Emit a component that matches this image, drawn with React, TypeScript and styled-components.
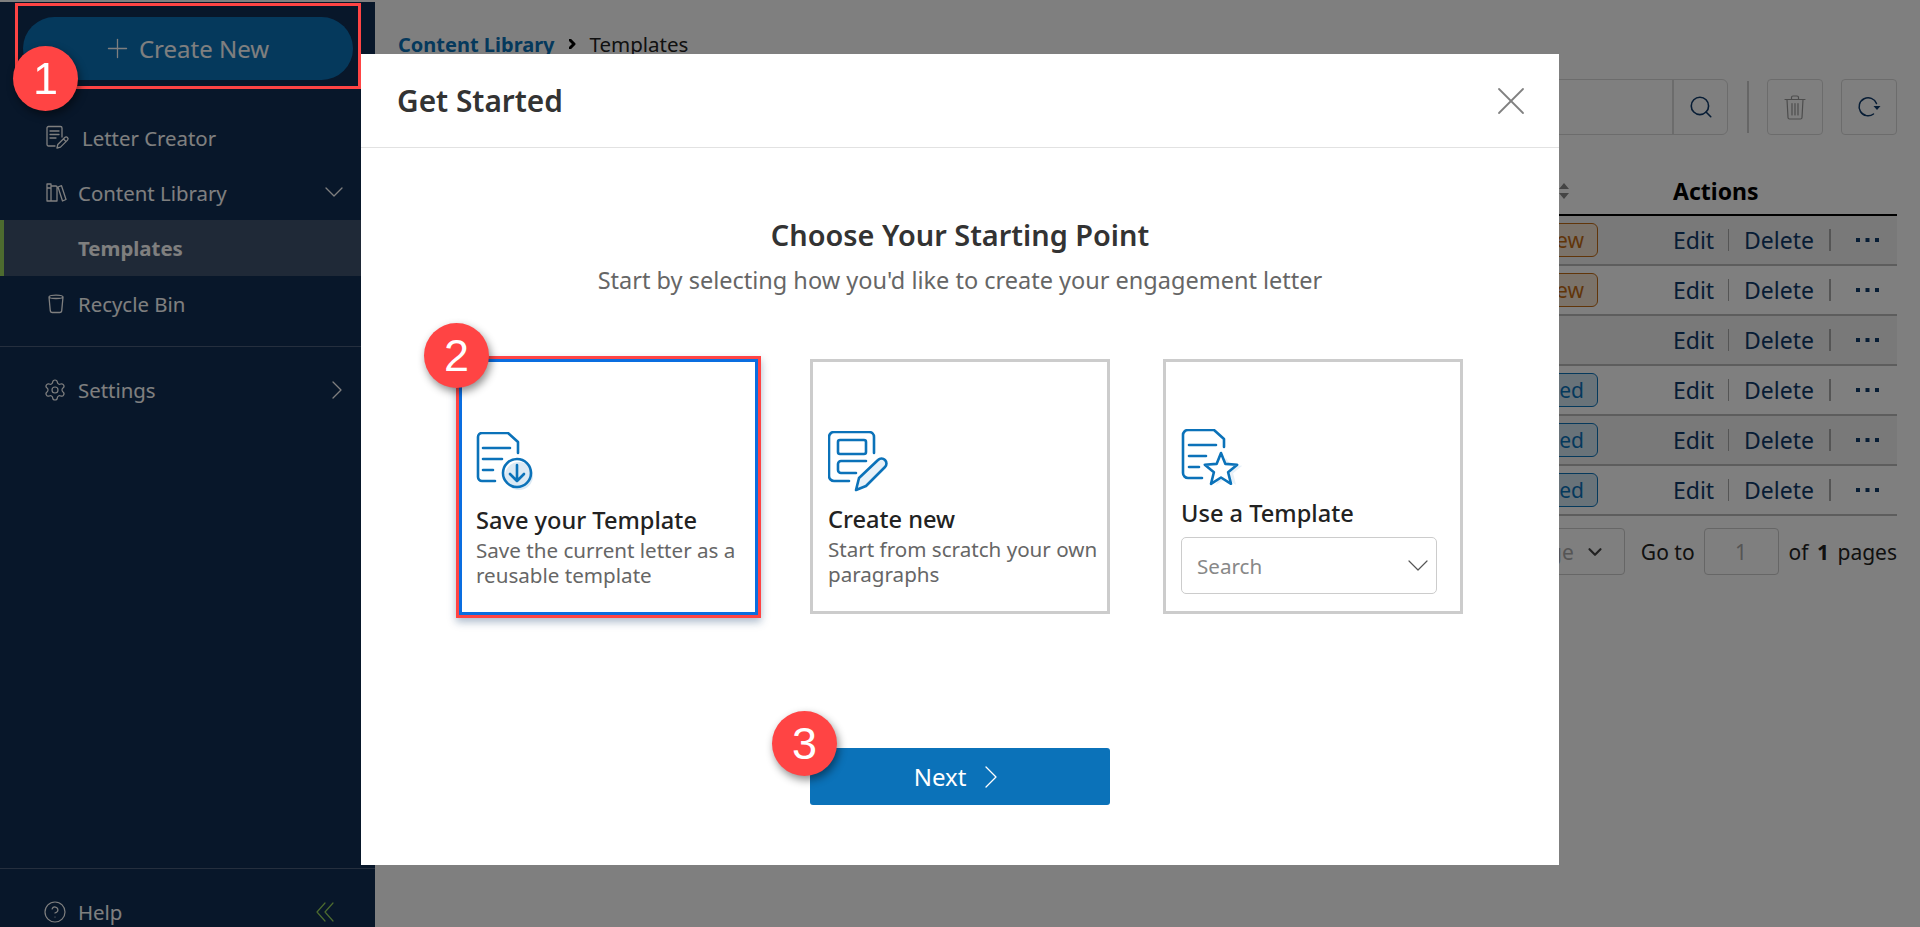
import styled, { createGlobalStyle } from "styled-components";
import { ChevronDown, CircleHelp, Plus, Search, Settings, X } from "lucide-react";

const FONT = `"Noto Sans", "Open Sans", sans-serif`;
const RED = "#ff4444";
const BLUE = "#0b72b9";

const GlobalStyle = createGlobalStyle`
  html, body {
    margin: 0;
    height: 100%;
    overflow: hidden;
    background: #fff;
  }
  * { box-sizing: border-box; }
  body { font-family: ${FONT}; }
`;

const Page = styled.div`
  display: flex;
  height: 927px;
  padding-top: 2px;
`;

const Sidebar = styled.aside`
  width: 375px;
  flex-shrink: 0;
  display: flex;
  flex-direction: column;
  background: #102e54;
  color: #fff;
  font-size: 20.4px;
`;

const CreateButton = styled.button`
  width: 330px;
  height: 63px;
  margin: 15px 0 30px 23px;
  padding: 0 5px 0 0;
  display: flex;
  align-items: center;
  justify-content: center;
  gap: 6px;
  border: 0;
  border-radius: 32px;
  background: ${BLUE};
  color: #fff;
  font: 400 24px ${FONT};
`;

const NavRow = styled.div<{ $active?: boolean; $height?: number; $indent?: number; $gap?: number }>`
  height: ${(p) => p.$height ?? 56}px;
  display: flex;
  align-items: center;
  padding-left: ${(p) => p.$indent ?? 46}px;
  width: 361px;
  gap: ${(p) => p.$gap ?? 6}px;
  font-weight: ${(p) => (p.$active ? 700 : 400)};
  background: ${(p) => (p.$active ? "#3e526e" : "transparent")};
  border-left: ${(p) => (p.$active ? "4px solid #9ad65e" : "0")};
`;

const NavEnd = styled.span`
  margin-left: auto;
  margin-right: 18px;
  display: flex;
`;

const SideDivider = styled.div`
  height: 1px;
  width: 361px;
  margin: 14px 0 15px;
  background: #4a5f7c;
`;

const SideFooter = styled.div`
  margin-top: auto;
  height: 59px;
  width: 375px;
  padding: 27px 0 0 43px;
  display: flex;
  align-items: center;
  gap: 11px;
  border-top: 1px solid #4a5f7c;
`;

const CollapseButton = styled.span`
  margin-left: auto;
  margin-right: 41px;
  display: flex;
`;

const Main = styled.main`
  flex: 1;
  min-width: 0;
  padding: 27px 23px 0;
  font-size: 23px;
  color: #222;
`;

const Crumbs = styled.div`
  height: 30px;
  display: flex;
  align-items: center;
  gap: 14px;
  font-size: 20.5px;
`;

const CrumbLink = styled.span`
  color: ${BLUE};
  font-weight: 700;
  font-size: 20px;
`;

const Toolbar = styled.div`
  margin-top: 20px;
  display: flex;
  justify-content: flex-end;
  align-items: center;
  gap: 18px;
`;

const SearchBox = styled.div`
  width: 420px;
  height: 56px;
  margin-right: 1px;
  display: flex;
  justify-content: flex-end;
  border: 1px solid #d9d9d9;
  border-radius: 6px;
`;

const SearchAddon = styled.div`
  width: 55px;
  display: flex;
  align-items: center;
  justify-content: center;
  border-left: 2px solid #d9d9d9;
  color: #0f3a6b;
`;

const ToolDivider = styled.div`
  width: 2px;
  height: 52px;
  background: #ccc;
`;

const ToolButton = styled.div<{ $color: string }>`
  width: 56px;
  height: 56px;
  display: flex;
  align-items: center;
  justify-content: center;
  border: 1px solid #d9d9d9;
  border-radius: 4px;
  color: ${(p) => p.$color};
`;

const TableRow = styled.div<{ $alt?: boolean }>`
  height: 50px;
  display: grid;
  grid-template-columns: 1fr 224px;
  column-gap: 75px;
  align-items: center;
  border-bottom: 2px solid #bbb;
  background: ${(p) => (p.$alt ? "#f3f3f3" : "transparent")};
`;

const TableHead = styled(TableRow)`
  height: 66px;
  margin-top: 15px;
  padding-top: 17px;
  border-bottom-color: #000;
  font-weight: 700;
  color: #000;
`;

const StatusCell = styled.div`
  display: flex;
  justify-content: flex-end;
`;

const SortCell = styled(StatusCell)`
  padding-right: 28px;
`;

const Status = styled.span<{ $tone: "review" | "published" }>`
  height: 34px;
  padding: 0 13px;
  display: flex;
  align-items: center;
  border-radius: 6px;
  font-size: 21px;
  color: ${(p) => (p.$tone === "review" ? "#c26a12" : BLUE)};
  border: 1px solid ${(p) => (p.$tone === "review" ? "#c26a12" : BLUE)};
  background: ${(p) => (p.$tone === "review" ? "#f7e6d5" : "#d3e6f3")};
`;

const Actions = styled.div`
  display: flex;
  align-items: center;
  color: #0f3a6b;
`;

const ActionLink = styled.span`
  width: 55px;
`;

const DeleteLink = styled.span`
  width: 85px;
`;

const ActionSep = styled.span`
  width: 1px;
  height: 22px;
  margin-right: 15px;
  background: #aaa;
`;

const DeleteSep = styled(ActionSep)`
  width: 2px;
  margin-right: 25px;
`;

const Pagination = styled.div`
  margin-top: 12px;
  display: flex;
  justify-content: flex-end;
  align-items: center;
  font-size: 21px;
`;

const PageSelect = styled.div`
  width: 170px;
  height: 47px;
  padding-right: 18px;
  display: flex;
  align-items: center;
  justify-content: flex-end;
  gap: 10px;
  border: 1px solid #ccc;
  border-radius: 4px;
  color: #aaa;
  white-space: nowrap;
`;

const GoTo = styled.span`
  margin: 0 9px 0 16px;
`;

const PageInput = styled.div`
  width: 75px;
  height: 47px;
  display: flex;
  align-items: center;
  justify-content: center;
  border: 1px solid #ccc;
  border-radius: 4px;
  color: #aaa;
`;

const PageCount = styled.span`
  margin-left: 10px;
  white-space: pre;
`;

const PageTotal = styled.b`
  margin: 0 3px;
`;

const Backdrop = styled.div`
  position: fixed;
  inset: 0;
  display: flex;
  justify-content: center;
  padding-top: 54px;
  background: rgba(0, 0, 0, 0.5);
`;

const Modal = styled.section`
  width: 1198px;
  height: 811px;
  display: flex;
  flex-direction: column;
  background: #fff;
`;

const ModalHeader = styled.header`
  height: 94px;
  flex-shrink: 0;
  padding: 0 24px 0 36px;
  display: flex;
  align-items: center;
  justify-content: space-between;
  border-bottom: 1px solid #e2e2e2;
  color: #333;
  font-size: 29.8px;
  font-weight: 600;
`;

const CloseIcon = styled.span`
  display: flex;
  color: #808080;
`;

const ModalBody = styled.div`
  display: flex;
  flex-direction: column;
  align-items: center;
  padding-top: 70px;
`;

const Heading = styled.h2`
  margin: 0;
  font-size: 28.9px;
  line-height: 34px;
  font-weight: 600;
  color: #333;
`;

const Subheading = styled.p`
  margin: 13px 0 0;
  font-size: 23.5px;
  line-height: 30px;
  color: #666;
`;

const Cards = styled.div`
  margin-top: 64px;
  display: flex;
  align-items: flex-start;
  gap: 53px;
`;

const Card = styled.div<{ $selected?: boolean; $bottom?: number }>`
  position: relative;
  width: ${(p) => (p.$selected ? 299 : 300)}px;
  height: ${(p) => (p.$selected ? 256 : 255)}px;
  margin: ${(p) => (p.$selected ? "0 -1px 0 2px" : "0")};
  padding: 0 8px ${(p) => p.$bottom ?? 24}px ${(p) => (p.$selected ? 14 : 15)}px;
  display: flex;
  flex-direction: column;
  justify-content: flex-end;
  border: 3px solid ${(p) => (p.$selected ? "#0a6ee0" : "#ccc")};
  outline: ${(p) => (p.$selected ? `3px solid ${RED}` : "none")};
  box-shadow: ${(p) => (p.$selected ? "0 4px 8px 3px rgba(20, 60, 110, 0.35)" : "none")};
`;

const CardIcon = styled.svg`
  display: block;
`;

const CardTitle = styled.div`
  margin-top: 8px;
  font-size: 23.6px;
  line-height: 36px;
  font-weight: 500;
  color: #222;
`;

const CardText = styled.div`
  font-size: 20.6px;
  line-height: 25px;
  color: #666;
`;

const SearchSelect = styled.div`
  height: 57px;
  margin: 6px 15px 0 0;
  padding: 0 8px 0 15px;
  display: flex;
  align-items: center;
  justify-content: space-between;
  border: 1px solid #ccc;
  border-radius: 5px;
  font-size: 20.6px;
  color: #888;
`;

const NextWrap = styled.div`
  position: relative;
  margin-top: 133px;
`;

const NextButton = styled.button`
  width: 300px;
  height: 57px;
  padding: 0 8px 0 0;
  display: flex;
  align-items: center;
  justify-content: center;
  gap: 19px;
  border: 0;
  border-radius: 3px;
  background: ${BLUE};
  color: #fff;
  font: 400 24px ${FONT};
`;

const Frame = styled.div`
  position: absolute;
  left: 15px;
  top: 3px;
  width: 346px;
  height: 86px;
  border: 3px solid ${RED};
`;

const Badge = styled.div<{ $x: number; $y: number }>`
  position: absolute;
  left: ${(p) => p.$x}px;
  top: ${(p) => p.$y}px;
  width: 65px;
  height: 65px;
  display: flex;
  align-items: center;
  justify-content: center;
  border-radius: 50%;
  background: ${RED};
  color: #fff;
  font: 400 45px "Liberation Sans", Arial, sans-serif;
  box-shadow: 2px 4px 8px rgba(0, 0, 0, 0.45);
`;

const SideIcon = ({ d }: { d: string }) => (
  <svg width="26" height="26" viewBox="0 0 26 26" fill="none" stroke="#fff" strokeWidth="1.3" strokeLinecap="round" strokeLinejoin="round">
    <path d={d} />
  </svg>
);

const Chevron = ({ dir, size, color = "currentColor", weight = 1.3 }: { dir: "down" | "right"; size: number; color?: string; weight?: number }) => {
  const half = size / 2;
  return dir === "down" ? (
    <svg width={size} height={half + 2} viewBox={`0 0 ${size} ${half + 2}`} fill="none" stroke={color} strokeWidth={weight} strokeLinecap="round" strokeLinejoin="round">
      <path d={`M1 1l${half - 1} ${half - 1} ${half - 1}-${half - 1}`} />
    </svg>
  ) : (
    <svg width={half + 2} height={size} viewBox={`0 0 ${half + 2} ${size}`} fill="none" stroke={color} strokeWidth={weight} strokeLinecap="round" strokeLinejoin="round">
      <path d={`M1 1l${half - 1} ${half - 1}-${half - 1} ${half - 1}`} />
    </svg>
  );
};

const LETTER_ICON =
  "M9 21H2.500a1.500 1.500 0 0 1-1.500-1.500V3A1.500 1.500 0 0 1 2.500 1.500h12A1.500 1.500 0 0 1 16 3v9M4 6h9M4 9.500h9M4 13h6M11 23l.8-3.500 7-7a1.800 1.800 0 0 1 2.700 2.600l-7 7zM17.500 14l2.600 2.600";
const LIBRARY_ICON =
  "M1 4h4v17H1zM1 8h4M5 6h5a1 1 0 0 1 1 1v14H5zM12 7l3.500-1.300L20 19.500 16.500 21z";
const BIN_ICON =
  "M3 6c0-2.500 14-2.500 14 0l-1.300 14a2 2 0 0 1-2 1.500H6.300a2 2 0 0 1-2-1.500zM3 6c0 2 14 2 14 0";

const SaveIcon = () => (
  <CardIcon width="58" height="62" viewBox="0 0 58 62" fill="none" stroke={BLUE} strokeWidth="2.6" strokeLinecap="round" strokeLinejoin="round">
    <circle cx="43" cy="44" r="14" fill="#dbe9f4" stroke="none" />
    <path d="M19 49H6a4 4 0 0 1-4-4V5a4 4 0 0 1 4-4h26l10 9v11M7 16h27M7 27h19M7 38h10" />
    <circle cx="41" cy="41" r="14" />
    <path d="M41 33v16M34 42l7 7 7-7" />
  </CardIcon>
);

const CreateIcon = () => (
  <CardIcon width="60" height="62" viewBox="0 0 60 62" fill="none" stroke={BLUE} strokeWidth="2.6" strokeLinecap="round" strokeLinejoin="round">
    <path d="M21 50H6a5 5 0 0 1-5-5V6a5 5 0 0 1 5-5h35a5 5 0 0 1 5 5v16" />
    <rect x="10" y="9" width="28" height="14" rx="2" />
    <path d="M38 30H13a3 3 0 0 0-3 3v6a3 3 0 0 0 3 3h15" />
    <path d="M28 59l3-12 19-18a4.500 4.500 0 0 1 7 7L38 55z" fill="#e8f1f8" />
  </CardIcon>
);

const StarIcon = () => (
  <CardIcon width="66" height="58" viewBox="0 0 66 58" fill="none" stroke={BLUE} strokeWidth="2.6" strokeLinecap="round" strokeLinejoin="round">
    <path
      d="M45 29l4.400 6.900 11.800.8-9.100 7.600 2.900 11.500-10-6.300-10 6.300 2.900-11.500-9.100-7.600 11.800-.8z"
      fill="#e8f1f8"
      stroke="none"
    />
    <path d="M21 49H7a5 5 0 0 1-5-5V6a5 5 0 0 1 5-5h26l10 9v8M8 16h27M8 27h17M8 38h10" />
    <path d="M40 24l4.400 10.900 11.800.8-9.100 7.600 2.900 11.500-10-6.300-10 6.300 2.900-11.500-9.100-7.600 11.800-.8z" fill="#fff" />
  </CardIcon>
);

const Dots = () => (
  <svg width="23" height="4" viewBox="0 0 23 4" fill="#0f3a6b">
    <rect width="4" height="4" />
    <rect x="9.500" width="4" height="4" />
    <rect x="19" width="4" height="4" />
  </svg>
);

const SortIcon = () => (
  <svg width="12" height="16" viewBox="0 0 12 16" fill="#888">
    <path d="M6 0l5 6H1zM6 16l5-6H1z" />
  </svg>
);

const TrashIcon = () => (
  <svg width="22" height="25" viewBox="0 0 22 25" fill="none" stroke="currentColor" strokeWidth="1.200" strokeLinecap="round">
    <path d="M1 4.500h20M7.500 4.500V2.500a1.500 1.500 0 0 1 1.500-1.500h4a1.500 1.500 0 0 1 1.500 1.500v2M3 4.500l1 18a1.500 1.500 0 0 0 1.500 1.500h11a1.500 1.500 0 0 0 1.500-1.500l1-18M8 8.500v11.500M11 8.500v11.500M14 8.500v11.500" />
  </svg>
);

const RefreshIcon = () => (
  <svg width="24" height="22" viewBox="0 0 24 22" fill="none" stroke="currentColor" strokeWidth="1.500" strokeLinecap="round">
    <path d="M19.500 7.500A9 9 0 1 0 16.500 18" />
    <path d="M16.500 10h7L20 14z" fill="currentColor" stroke="none" />
  </svg>
);

const CollapseIcon = () => (
  <svg width="18" height="20" viewBox="0 0 18 20" fill="none" stroke="#9ad65e" strokeWidth="1.200" strokeLinecap="round" strokeLinejoin="round">
    <path d="M9 1L1 10l8 9M17 1L9 10l8 9" />
  </svg>
);

const ROWS: { status?: { label: string; tone: "review" | "published" }; alt?: boolean }[] = [
  { status: { label: "In Review", tone: "review" }, alt: true },
  { status: { label: "In Review", tone: "review" } },
  { alt: true },
  { status: { label: "Published", tone: "published" } },
  { status: { label: "Published", tone: "published" }, alt: true },
  { status: { label: "Published", tone: "published" } },
];

export default function App() {
  return (
    <>
      <GlobalStyle />
      <Page>
        <Sidebar>
          <CreateButton>
            <Plus size={31} strokeWidth={1} />
            Create New
          </CreateButton>
          <NavRow $height={55} $gap={10}>
            <SideIcon d={LETTER_ICON} />
            Letter Creator
          </NavRow>
          <NavRow $height={55}>
            <SideIcon d={LIBRARY_ICON} />
            Content Library
            <NavEnd>
              <Chevron dir="down" size={18} />
            </NavEnd>
          </NavRow>
          <NavRow $active $indent={74}>
            Templates
          </NavRow>
          <NavRow>
            <SideIcon d={BIN_ICON} />
            Recycle Bin
          </NavRow>
          <SideDivider />
          <NavRow $indent={43} $gap={11}>
            <Settings size={24} strokeWidth={1.2} />
            Settings
            <NavEnd>
              <Chevron dir="right" size={18} />
            </NavEnd>
          </NavRow>
          <SideFooter>
            <CircleHelp size={24} strokeWidth={1.2} />
            Help
            <CollapseButton>
              <CollapseIcon />
            </CollapseButton>
          </SideFooter>
        </Sidebar>
        <Main>
          <Crumbs>
            <CrumbLink>Content Library</CrumbLink>
            <Chevron dir="right" size={10} color="#000" weight={3} />
            <span>Templates</span>
          </Crumbs>
          <Toolbar>
            <SearchBox>
              <SearchAddon>
                <Search size={26} strokeWidth={1.5} />
              </SearchAddon>
            </SearchBox>
            <ToolDivider />
            <ToolButton $color="#999">
              <TrashIcon />
            </ToolButton>
            <ToolButton $color="#0f3a6b">
              <RefreshIcon />
            </ToolButton>
          </Toolbar>
          <TableHead>
            <SortCell>
              <SortIcon />
            </SortCell>
            <span>Actions</span>
          </TableHead>
          {ROWS.map((row, i) => (
            <TableRow key={i} $alt={row.alt}>
              <StatusCell>
                {row.status && <Status $tone={row.status.tone}>{row.status.label}</Status>}
              </StatusCell>
              <Actions>
                <ActionLink>Edit</ActionLink>
                <ActionSep />
                <DeleteLink>Delete</DeleteLink>
                <DeleteSep />
                <Dots />
              </Actions>
            </TableRow>
          ))}
          <Pagination>
            <PageSelect>
              10 / page
              <ChevronDown size={22} strokeWidth={2.4} color="#444" />
            </PageSelect>
            <GoTo>Go to</GoTo>
            <PageInput>1</PageInput>
            <PageCount>
              of<PageTotal> 1 </PageTotal>pages
            </PageCount>
          </Pagination>
        </Main>
      </Page>
      <Backdrop>
        <Frame />
        <Badge $x={13} $y={46}>1</Badge>
        <Modal>
          <ModalHeader>
            Get Started
            <CloseIcon>
              <X size={48} strokeWidth={0.9} />
            </CloseIcon>
          </ModalHeader>
          <ModalBody>
            <Heading>Choose Your Starting Point</Heading>
            <Subheading>Start by selecting how you'd like to create your engagement letter</Subheading>
            <Cards>
              <Card $selected>
                <Badge $x={-38} $y={-39}>2</Badge>
                <SaveIcon />
                <CardTitle>Save your Template</CardTitle>
                <CardText>Save the current letter as a reusable template</CardText>
              </Card>
              <Card>
                <CreateIcon />
                <CardTitle>Create new</CardTitle>
                <CardText>Start from scratch your own paragraphs</CardText>
              </Card>
              <Card $bottom={17}>
                <StarIcon />
                <CardTitle>Use a Template</CardTitle>
                <SearchSelect>
                  Search
                  <Chevron dir="down" size={20} color="#555" weight={1.2} />
                </SearchSelect>
              </Card>
            </Cards>
            <NextWrap>
              <Badge $x={-38} $y={-37}>3</Badge>
              <NextButton>
                Next
                <Chevron dir="right" size={22} weight={1.3} />
              </NextButton>
            </NextWrap>
          </ModalBody>
        </Modal>
      </Backdrop>
    </>
  );
}
